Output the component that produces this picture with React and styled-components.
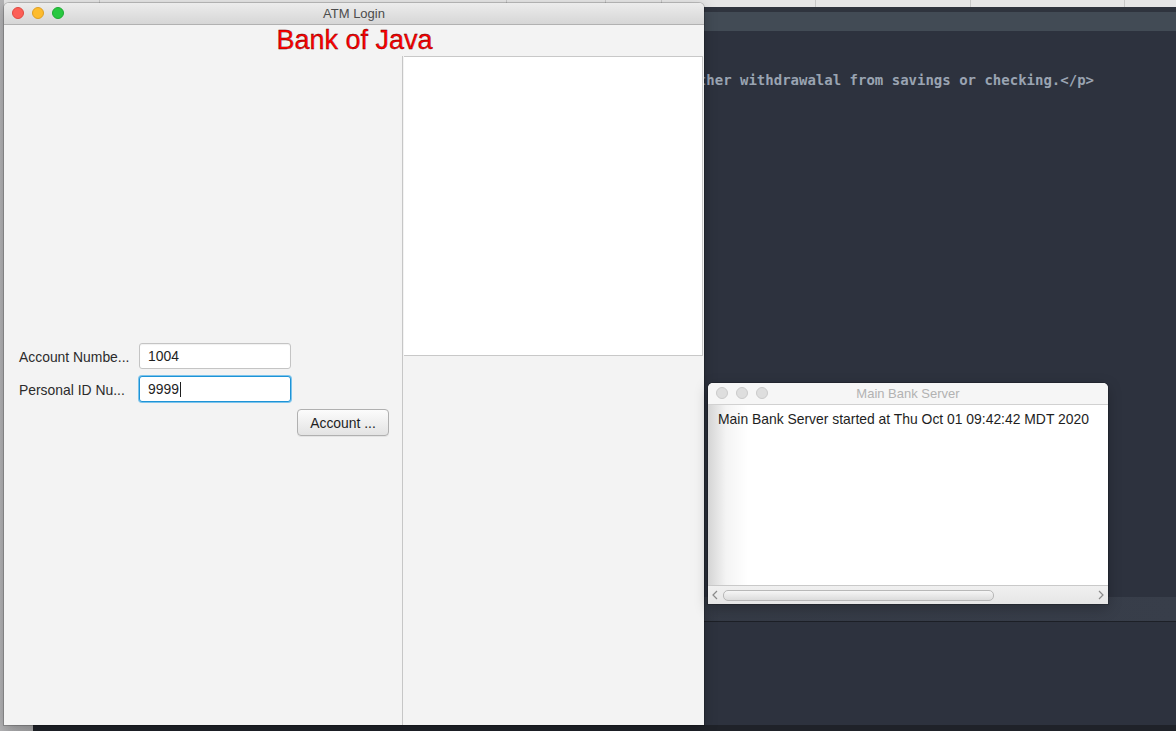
import React from "react";
import styled, { createGlobalStyle } from "styled-components";

const GlobalStyle = createGlobalStyle`
  html, body {
    margin: 0;
    padding: 0;
    width: 1176px;
    height: 731px;
    overflow: hidden;
    background: #2d323e;
  }
  * {
    box-sizing: border-box;
  }
`;

function ATMWindow() {
  return (
    <Window $left={4} $top={3} $width={700} $height={722}>
      <TitleBar>
        <Lights>
          <Light $color="#fc5f57" $border="#de4840" />
          <Light $color="#fdbc2e" $border="#dd9f24" />
          <Light $color="#28c840" $border="#1ea932" />
        </Lights>
        <WindowTitle>ATM Login</WindowTitle>
      </TitleBar>
      <ATMContent>
        <Heading>Bank of Java</Heading>
        <ATMBody>
          <LeftPane>
            <Form>
              <FieldGrid>
                <Label>Account Numbe...</Label>
                <Field>1004</Field>
                <Label>Personal ID Nu...</Label>
                <Field $focused>
                  9999
                  <Caret />
                </Field>
              </FieldGrid>
              <ButtonRow>
                <Button>Account ...</Button>
              </ButtonRow>
            </Form>
          </LeftPane>
          <RightPane>
            <OutputArea />
          </RightPane>
        </ATMBody>
      </ATMContent>
    </Window>
  );
}

function ServerWindow() {
  return (
    <Window $left={708} $top={383} $width={400} $height={221}>
      <TitleBar $inactive>
        <Lights>
          <Light $color="#dedede" $border="#cacaca" />
          <Light $color="#dedede" $border="#cacaca" />
          <Light $color="#dedede" $border="#cacaca" />
        </Lights>
        <WindowTitle $inactive>Main Bank Server</WindowTitle>
      </TitleBar>
      <LogArea>Main Bank Server started at Thu Oct 01 09:42:42 MDT 2020</LogArea>
      <ScrollBar>
        <Arrow viewBox="0 0 6 10">
          <path d="M5 1 L1 5 L5 9" />
        </Arrow>
        <Thumb />
        <Arrow viewBox="0 0 6 10">
          <path d="M1 1 L5 5 L1 9" />
        </Arrow>
      </ScrollBar>
    </Window>
  );
}

export default function App() {
  return (
    <>
      <GlobalStyle />
      <Desktop>
        <Editor>
          <TabStrip>
            <Tab $width={96} />
            <Tab $width={407} />
            <Tab $width={99} />
            <Tab $width={56} />
            <Tab $width={154} />
            <Tab $width={155} />
            <Tab $width={154} />
            <Tab $width={55} />
          </TabStrip>
          <EditorGap />
          <EditorBand />
          <CodeArea>
            <CodeLine>either withdrawalal from savings or checking.&lt;/p&gt;</CodeLine>
          </CodeArea>
          <PanelBand />
          <PanelArea />
        </Editor>
        <ATMWindow />
        <ServerWindow />
      </Desktop>
    </>
  );
}

const Desktop = styled.div`
  position: relative;
  width: 1176px;
  height: 731px;
  overflow: hidden;
  background: linear-gradient(to right, #b4b4b6 0, #a6a6a8 33px, #1f2229 33px);
`;

const Editor = styled.div`
  margin-left: 4px;
  height: 725px;
  display: flex;
  flex-direction: column;
  background: #2d323e;
`;

const TabStrip = styled.div`
  height: 7px;
  display: flex;
  background: #e6e6e6;
`;

const Tab = styled.div`
  width: ${(p) => p.$width}px;
  flex-shrink: 0;
  border-right: 1px solid #c8c8c8;
`;

const EditorGap = styled.div`
  height: 5px;
  background: #2f343e;
`;

const EditorBand = styled.div`
  height: 19px;
  background: #424b55;
`;

const CodeArea = styled.div`
  flex: 1;
  padding: 40px 0 0 677px;
  background: #2d323e;
`;

const CodeLine = styled.div`
  font-family: "DejaVu Sans Mono", monospace;
  font-size: 14px;
  font-weight: bold;
  line-height: 18px;
  color: #9aa4b2;
  white-space: nowrap;
`;

const PanelBand = styled.div`
  height: 25px;
  background: linear-gradient(to right, #30353f, #383e4a);
  border-bottom: 1px solid #1d2027;
`;

const PanelArea = styled.div`
  height: 103px;
  background: #2d323e;
`;

const Window = styled.div`
  position: absolute;
  left: ${(p) => p.$left}px;
  top: ${(p) => p.$top}px;
  width: ${(p) => p.$width}px;
  height: ${(p) => p.$height}px;
  display: flex;
  flex-direction: column;
  border-radius: 5px 5px 0 0;
  overflow: hidden;
  background: #f3f3f3;
  box-shadow: 0 0 0 1px rgba(0, 0, 0, 0.18), 0 4px 14px rgba(0, 0, 0, 0.25);
  font-family: "Liberation Sans", Arial, sans-serif;
`;

const TitleBar = styled.div`
  position: relative;
  height: 22px;
  flex-shrink: 0;
  display: flex;
  align-items: center;
  justify-content: center;
  background: ${(p) =>
    p.$inactive
      ? "#f6f6f6"
      : "linear-gradient(to bottom, #ececec, #d6d6d6)"};
  border-bottom: 1px solid ${(p) => (p.$inactive ? "#d1d1d1" : "#b1b1b1")};
`;

const Lights = styled.div`
  position: absolute;
  left: 8px;
  top: 4px;
  display: flex;
  gap: 8px;
`;

const Light = styled.span`
  width: 12px;
  height: 12px;
  border-radius: 50%;
  background: ${(p) => p.$color};
  border: 0.5px solid ${(p) => p.$border};
`;

const WindowTitle = styled.span`
  font-size: 13px;
  color: ${(p) => (p.$inactive ? "#b2b2b2" : "#4c4c4c")};
`;

const ATMContent = styled.div`
  flex: 1;
  display: flex;
  flex-direction: column;
`;

const Heading = styled.div`
  height: 31px;
  text-align: center;
  font-family: "Liberation Sans", Arial, sans-serif;
  font-size: 27px;
  line-height: 31px;
  color: #ff0000;
  -webkit-text-stroke: 0.35px #600000;
  padding-left: 1px;
`;

const ATMBody = styled.div`
  flex: 1;
  display: flex;
`;

const LeftPane = styled.div`
  flex: 1;
  display: flex;
  align-items: center;
  padding: 0 13px 0 15px;
`;

const Form = styled.div`
  width: 100%;
  display: flex;
  flex-direction: column;
  gap: 7px;
  margin-top: -2px;
`;

const FieldGrid = styled.div`
  display: grid;
  grid-template-columns: 120px 152px;
  row-gap: 7px;
  align-items: center;
`;

const Label = styled.div`
  font-size: 13.9px;
  color: #2b2b2b;
  white-space: nowrap;
  padding-top: 1px;
`;

const Field = styled.div`
  height: 26px;
  display: flex;
  align-items: center;
  padding-left: 8px;
  background: #fff;
  border-radius: 3px;
  font-size: 13.9px;
  color: #1e1e1e;
  border: 1px solid ${(p) => (p.$focused ? "#1e93d6" : "#c4c4c4")};
  box-shadow: ${(p) =>
    p.$focused ? "0 0 0 1px #7cc4ec" : "inset 0 1px 1px rgba(0,0,0,0.06)"};
`;

const Caret = styled.span`
  width: 1px;
  height: 15px;
  margin-left: 1px;
  background: #1e1e1e;
`;

const ButtonRow = styled.div`
  display: flex;
  justify-content: flex-end;
`;

const Button = styled.div`
  width: 92px;
  height: 27px;
  display: flex;
  align-items: center;
  justify-content: center;
  border: 1px solid #b0b0b0;
  border-radius: 4px;
  background: linear-gradient(to bottom, #fcfcfc, #e3e3e3);
  box-shadow: 0 1px 0 rgba(0, 0, 0, 0.06);
  font-size: 13.9px;
  color: #1e1e1e;
`;

const RightPane = styled.div`
  width: 302px;
  border-left: 1px solid #c6c6c6;
  padding: 0 1px 0 1px;
  background: #f3f3f3;
`;

const OutputArea = styled.div`
  height: 300px;
  background: #fff;
  border: 1px solid #c8c8c8;
  border-left: none;
`;

const LogArea = styled.div`
  flex: 1;
  padding: 6px 0 0 10px;
  background: linear-gradient(to right, #d4d4d4 0, #f4f4f4 18px, #fff 40px);
  font-size: 13.9px;
  color: #1e1e1e;
  white-space: nowrap;
  overflow: hidden;
`;

const ScrollBar = styled.div`
  height: 19px;
  flex-shrink: 0;
  display: flex;
  align-items: center;
  padding: 0 4px 0 4px;
  gap: 5px;
  background: linear-gradient(to bottom, #f0f0f0, #e6e6e6);
  border-top: 1px solid #c9c9c9;
`;

const Arrow = styled.svg`
  width: 6px;
  height: 10px;
  flex-shrink: 0;
  fill: none;
  stroke: #8a8a8a;
  stroke-width: 1.2;
`;

const Thumb = styled.div`
  width: 271px;
  height: 11px;
  margin-right: auto;
  border: 1px solid #b8b8b8;
  border-radius: 5px;
  background: linear-gradient(to bottom, #f6f6f6, #dcdcdc);
`;
